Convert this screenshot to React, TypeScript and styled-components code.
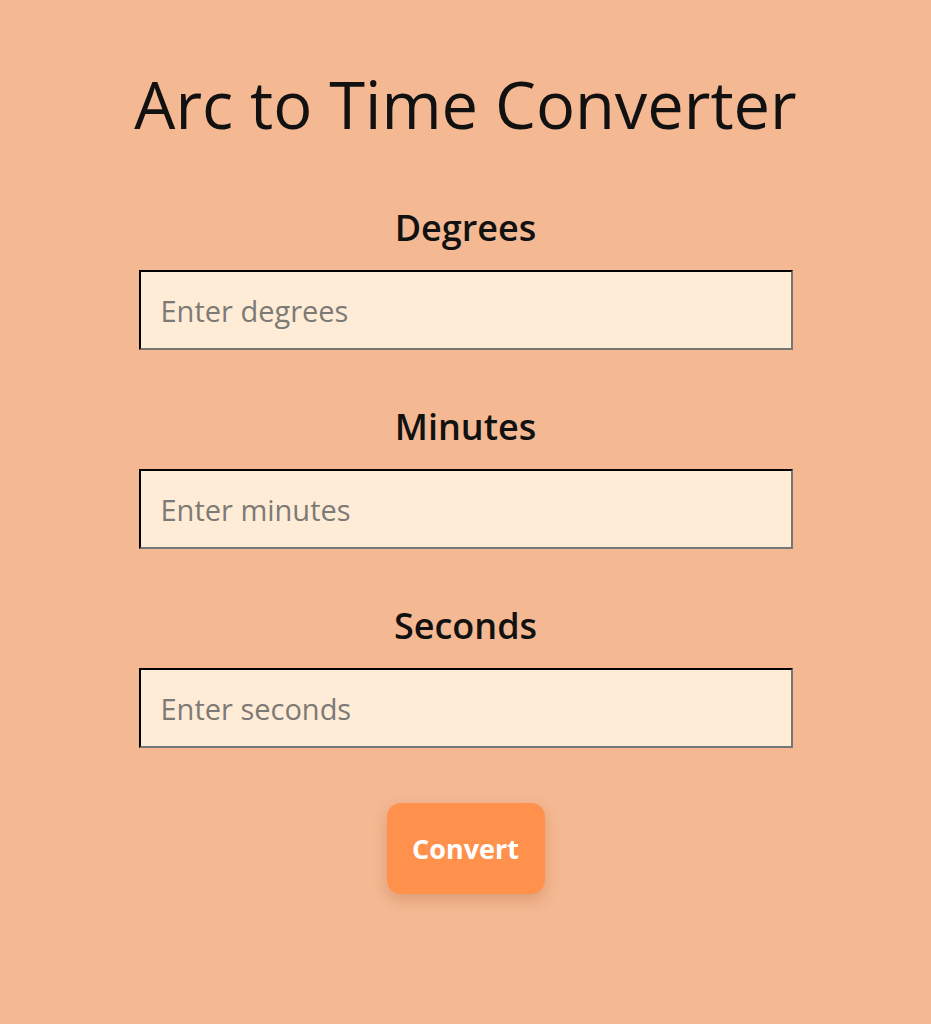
import React from "react";
import styled, { createGlobalStyle } from "styled-components";

const GlobalStyle = createGlobalStyle`
  html, body {
    margin: 0;
    padding: 0;
    background: #f4b892;
  }
  body {
    font-family: "Open Sans", "Noto Sans", sans-serif;
    color: #111;
  }
`;

const Page = styled.main`
  display: flex;
  flex-direction: column;
  align-items: center;
  padding-top: 63px;
  min-height: 1024px;
  box-sizing: border-box;
`;

const Title = styled.h1`
  margin: 0 0 60px;
  font-size: 65px;
  font-weight: 400;
  line-height: 82px;
  color: #111;
`;

const Form = styled.form`
  display: flex;
  flex-direction: column;
  align-items: center;
  width: 654px;
`;

const Field = styled.div`
  display: flex;
  flex-direction: column;
  align-items: center;
  width: 100%;
  margin-bottom: 54px;
`;

const Label = styled.label`
  font-size: 36px;
  font-weight: 600;
  line-height: 46px;
  margin-bottom: 19px;
  color: #111;
`;

const Input = styled.input`
  width: 100%;
  height: 80px;
  box-sizing: border-box;
  background: #feecd6;
  border: 2px inset #767676;
  border-top-color: #1c1410;
  border-left-color: #1c1410;
  padding: 0 20px;
  font-family: "Open Sans", "Noto Sans", sans-serif;
  font-size: 29px;
  color: #222;
  outline: none;

  &::placeholder {
    color: #7d7a76;
  }
`;

const Button = styled.button`
  margin-top: 1px;
  width: 158px;
  height: 91px;
  border: none;
  border-radius: 14px;
  background: #ff914d;
  color: #fff;
  font-family: "Open Sans", "Noto Sans", sans-serif;
  font-size: 27px;
  font-weight: 700;
  box-shadow: 0 6px 14px rgba(150, 80, 30, 0.25);
  cursor: pointer;
`;

const fields = [
  { id: "degrees", label: "Degrees", placeholder: "Enter degrees" },
  { id: "minutes", label: "Minutes", placeholder: "Enter minutes" },
  { id: "seconds", label: "Seconds", placeholder: "Enter seconds" },
];

export default function App() {
  return (
    <>
      <GlobalStyle />
      <Page>
        <Title>Arc to Time Converter</Title>
        <Form onSubmit={(e) => e.preventDefault()}>
          {fields.map((f) => (
            <Field key={f.id}>
              <Label htmlFor={f.id}>{f.label}</Label>
              <Input id={f.id} type="number" placeholder={f.placeholder} />
            </Field>
          ))}
          <Button type="submit">Convert</Button>
        </Form>
      </Page>
    </>
  );
}
